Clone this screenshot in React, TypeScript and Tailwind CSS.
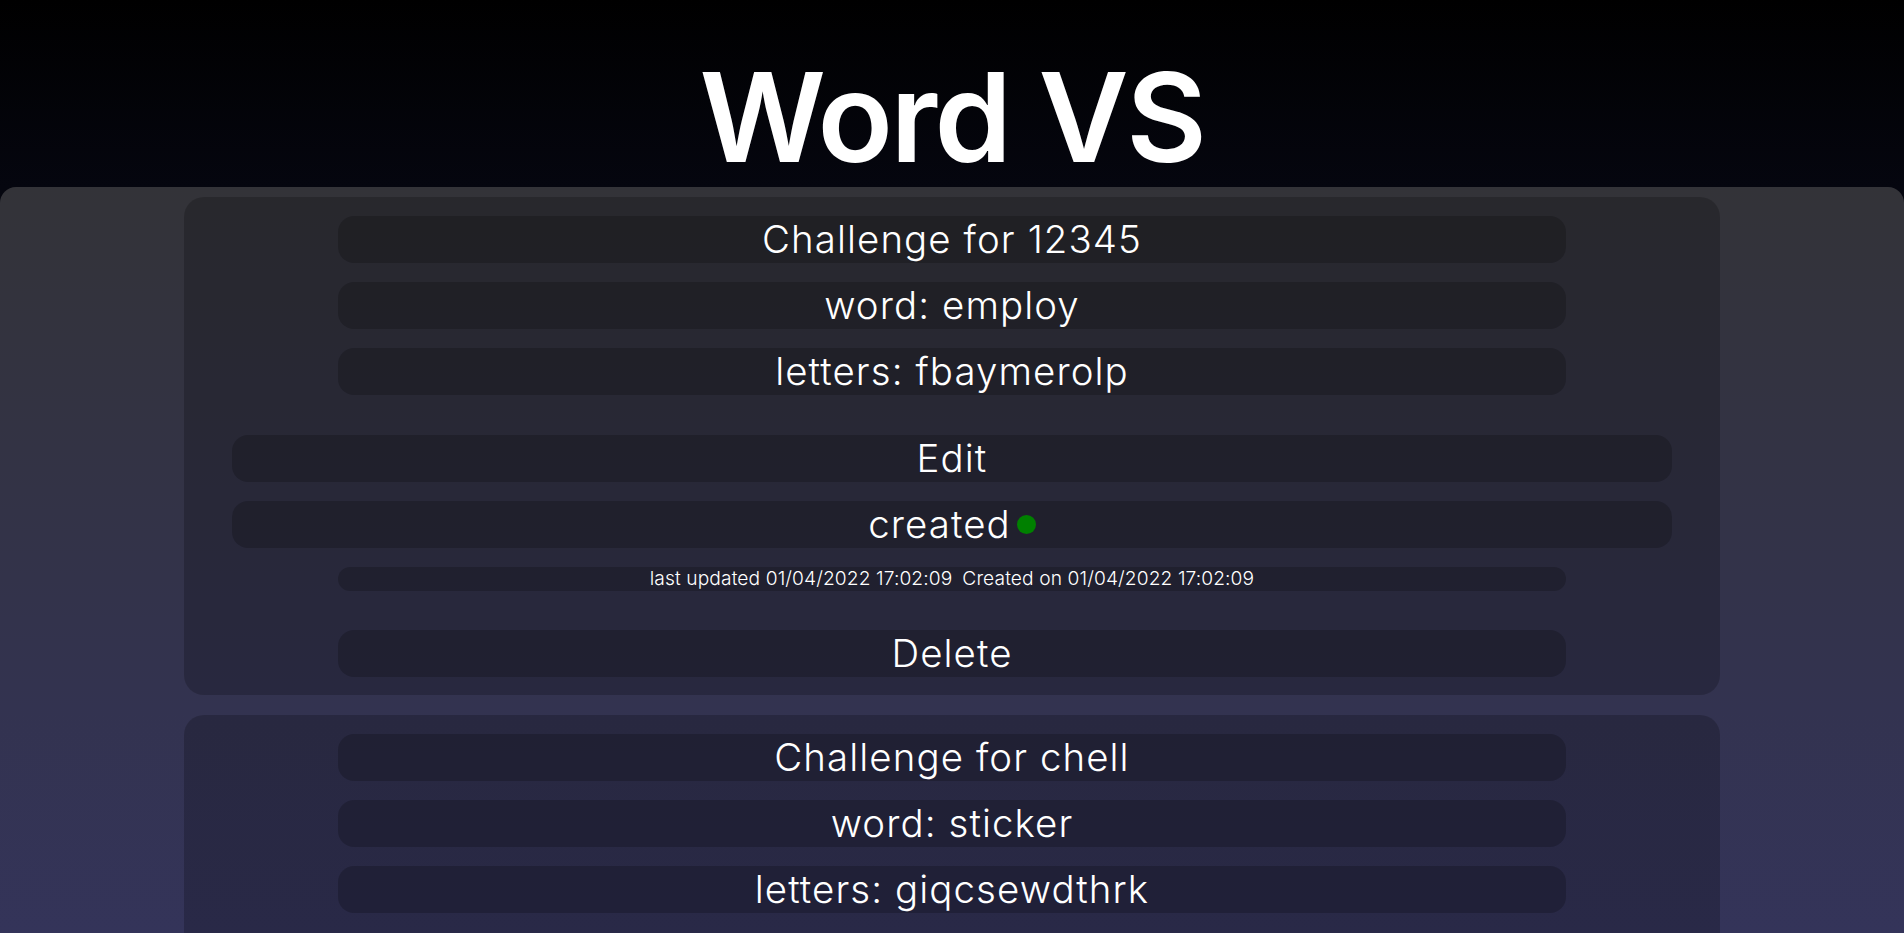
const challenges = [
  {
    user: '12345',
    word: 'employ',
    letters: 'fbaymerolp',
    updated: '01/04/2022 17:02:09',
    created: '01/04/2022 17:02:09',
  },
  {
    user: 'chell',
    word: 'sticker',
    letters: 'giqcsewdthrk',
    updated: '01/04/2022 17:05:41',
    created: '01/04/2022 17:05:41',
  },
]

type Challenge = (typeof challenges)[number]

const Row = ({ children, wide }: { children: React.ReactNode; wide?: boolean }) => (
  <div
    className={`${wide ? 'mx-12' : 'mx-auto w-4/5'} flex h-[47px] items-center justify-center rounded-[16px] bg-black/20 text-[38.4px] leading-none tracking-[1.1px]`}
  >
    {children}
  </div>
)

const ChallengeCard = ({ c }: { c: Challenge }) => (
  <div className="mx-auto flex w-full max-w-[1536px] flex-col gap-[19px] rounded-[20px] bg-black/20 pt-[19px] pb-[18px]">
    <Row>Challenge for {c.user}</Row>
    <Row>word: {c.word}</Row>
    <Row>letters: {c.letters}</Row>
    <div className="mt-[21px] flex flex-col gap-[19px]">
      <Row wide>Edit</Row>
      <Row wide>
        created
        <span className="ml-[6px] inline-block size-[19px] rounded-full bg-[#008000]" />
      </Row>
    </div>
    <div className="mx-auto flex h-[24px] w-4/5 items-center justify-center rounded-[12px] bg-black/20 text-[19.2px] leading-none tracking-[0.1px]">
      <span>last updated {c.updated}</span>
      <span className="ml-[10px]">Created on {c.created}</span>
    </div>
    <div className="mt-[20px]">
      <Row>Delete</Row>
    </div>
  </div>
)

export default function App() {
  return (
    <div className="min-h-screen bg-[linear-gradient(180deg,#000000_0px,#05060f_187px)] font-['Inter','Liberation_Sans',sans-serif] font-light text-white">
      <header className="flex h-[187px] items-start justify-center">
        <h1 className="mt-[42px] text-[124px] leading-[1.21] font-semibold tracking-[-2.4px]">Word VS</h1>
      </header>
      <main className="flex flex-col gap-[20px] rounded-t-[16px] bg-[linear-gradient(180deg,#333338_0px,#333350_520px,#34345a_760px,#34345c_1200px)] pt-[10px] pb-[20px]">
        {challenges.map((c) => (
          <ChallengeCard key={c.user} c={c} />
        ))}
      </main>
    </div>
  )
}
